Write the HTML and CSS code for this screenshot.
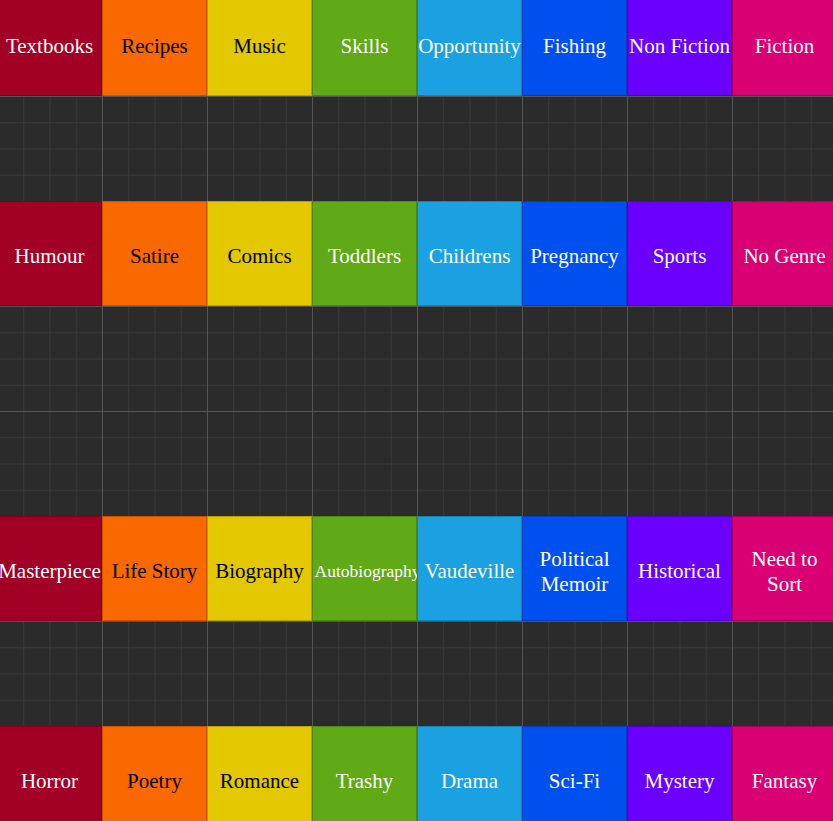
FILE: index.html
```html
<!DOCTYPE html>
<html lang="en">
<head>
<meta charset="utf-8">
<title>Genres</title>
<link rel="stylesheet" href="styles.css">
</head>
<body>
<div class="board">
  <div class="row">
    <div class="tile crimson">Textbooks</div>
    <div class="tile orange">Recipes</div>
    <div class="tile yellow">Music</div>
    <div class="tile green">Skills</div>
    <div class="tile cyan">Opportunity</div>
    <div class="tile cobalt">Fishing</div>
    <div class="tile indigo">Non Fiction</div>
    <div class="tile magenta">Fiction</div>
  </div>
  <div class="spacer"></div>
  <div class="row">
    <div class="tile crimson">Humour</div>
    <div class="tile orange">Satire</div>
    <div class="tile yellow">Comics</div>
    <div class="tile green">Toddlers</div>
    <div class="tile cyan">Childrens</div>
    <div class="tile cobalt">Pregnancy</div>
    <div class="tile indigo">Sports</div>
    <div class="tile magenta">No Genre</div>
  </div>
  <div class="spacer double"></div>
  <div class="row">
    <div class="tile crimson">Masterpiece</div>
    <div class="tile orange">Life Story</div>
    <div class="tile yellow">Biography</div>
    <div class="tile green small">Autobiography</div>
    <div class="tile cyan">Vaudeville</div>
    <div class="tile cobalt">Political Memoir</div>
    <div class="tile indigo">Historical</div>
    <div class="tile magenta">Need to Sort</div>
  </div>
  <div class="spacer"></div>
  <div class="row">
    <div class="tile crimson">Horror</div>
    <div class="tile orange">Poetry</div>
    <div class="tile yellow">Romance</div>
    <div class="tile green">Trashy</div>
    <div class="tile cyan">Drama</div>
    <div class="tile cobalt">Sci-Fi</div>
    <div class="tile indigo">Mystery</div>
    <div class="tile magenta">Fantasy</div>
  </div>
</div>
</body>
</html>
```

FILE: styles.css
```css
html, body {
  margin: 0;
  padding: 0;
  background: #2b2b2b;
  overflow: hidden;
}

.board {
  width: 840px;
  height: 840px;
  margin-top: -9px;
  margin-left: -3px;
  display: flex;
  flex-direction: column;
  background-color: #2b2b2b;
  background-image:
    linear-gradient(to right, #555555 1px, transparent 1px),
    linear-gradient(to bottom, #555555 1px, transparent 1px),
    linear-gradient(to right, #393939 1px, transparent 1px),
    linear-gradient(to bottom, #393939 1px, transparent 1px);
  background-size: 105px 105px, 105px 105px, 26.25px 26.25px, 26.25px 26.25px;
}

.row {
  display: flex;
  flex: none;
  height: 105px;
}

.spacer {
  flex: none;
  height: 105px;
}

.spacer.double {
  height: 210px;
}

.tile {
  width: 105px;
  height: 105px;
  flex: none;
  box-sizing: border-box;
  border: 1px solid rgba(0, 0, 0, 0.2);
  padding-top: 6px;
  display: flex;
  align-items: center;
  justify-content: center;
  text-align: center;
  font-family: "Liberation Serif", "Times New Roman", Times, serif;
  font-size: 21px;
  color: #ffffff;
}

.tile.small {
  font-size: 17.5px;
  padding-left: 6px;
}

.crimson { background: #a20025; }
.orange  { background: #fa6800; color: #000000; }
.yellow  { background: #e3c800; color: #000000; }
.green   { background: #60a917; }
.cyan    { background: #1ba1e2; }
.cobalt  { background: #0050ef; }
.indigo  { background: #6a00ff; }
.magenta { background: #d80073; }
```
